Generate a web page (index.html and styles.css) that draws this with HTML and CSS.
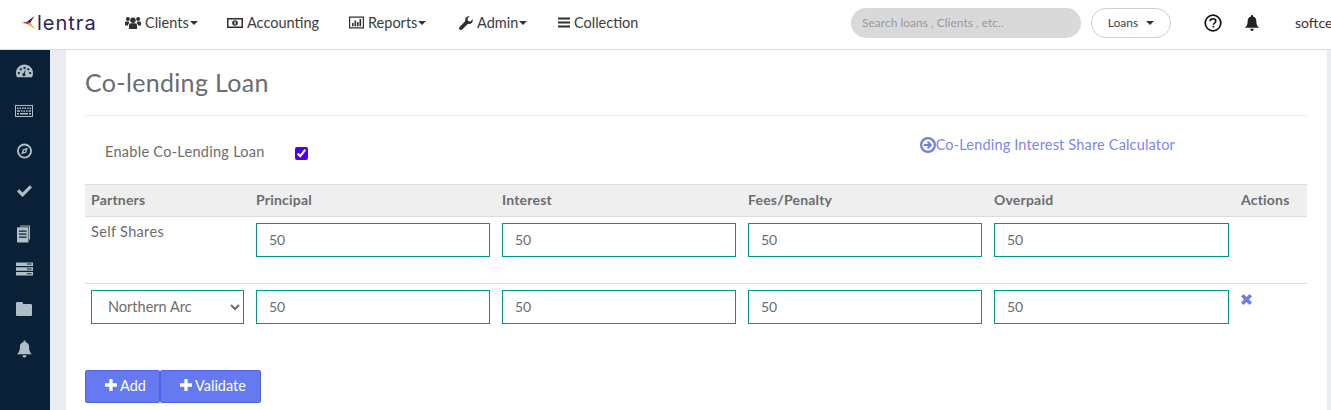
FILE: index.html
```html
<!DOCTYPE html>
<html lang="en">
<head>
    <meta charset="UTF-8">
    <meta name="viewport" content="width=device-width, initial-scale=1.0">
    <link rel="stylesheet" href="styles.css">
    <title>Co-lending Loan</title>
</head>
<body>
    <header class="topbar">
        <a class="brand" href="#">
            <svg class="brand-mark" viewBox="0 0 14 15" width="14" height="15">
                <path d="M5 6.800 L12.500 1 L7.800 8.500 Z" fill="#2b2458"/>
                <path d="M5.500 9.500 L8 7.800 L13.500 14 Z" fill="#f2b01e"/>
                <path d="M0 7.800 L6.500 6.200 L6.800 9.300 Z" fill="#c8283c"/>
            </svg>
            <span>lentra</span>
        </a>
        <nav class="nav">
            <a class="nav-item nav-clients" href="#">
                <svg class="ico" viewBox="0 0 16 14" width="16" height="14"><circle cx="8" cy="4.200" r="2.700"/><circle cx="2.900" cy="3" r="2"/><circle cx="13.100" cy="3" r="2"/><path d="M4 13V9.500C4 8 5 7.300 6 7.300h4c1 0 2 .7 2 2.200V13zM0 9.500V7c0-1 .6-1.600 1.500-1.600h2.200c0 .8.4 1.300.9 1.600C3.700 7.400 3 8.300 3 9.500zM16 9.500V7c0-1-.6-1.600-1.500-1.600h-2.200c0 .8-.4 1.300-.9 1.600 .9.400 1.600 1.300 1.600 2.500z"/></svg>
                Clients<i class="caret"></i>
            </a>
            <a class="nav-item nav-accounting" href="#">
                <svg class="ico" viewBox="0 0 16 12" width="16" height="12"><path fill-rule="evenodd" d="M0 1h16v10H0zM1.500 2.500v7h13v-7zM8 3.200a2.800 2.800 0 1 1 0 5.600 2.800 2.800 0 0 1 0-5.600z"/><rect x="7.400" y="4.500" width="1.200" height="3" fill="#fff"/></svg>
                Accounting
            </a>
            <a class="nav-item nav-reports" href="#">
                <svg class="ico" viewBox="0 0 15 13" width="15" height="13"><path fill-rule="evenodd" d="M0 .5h15v12H0zM1.200 1.700v9.600h12.600V1.700z"/><path d="M3 7h1.600v3.300H3zM5.500 4.500h1.600v5.800H5.500zM8 6h1.600v4.300H8zM10.500 3h1.600v7.300h-1.600z"/></svg>
                Reports<i class="caret"></i>
            </a>
            <a class="nav-item nav-admin" href="#">
                <svg class="ico" viewBox="0 0 14 14" width="14" height="14"><path d="M13.700 3.300c.3 1.400-.1 2.700-1 3.600-1 1-2.400 1.300-3.700.9L3.200 13.500c-.7.700-1.900.7-2.600 0-.7-.7-.7-1.900 0-2.600L6.300 5C5.900 3.700 6.200 2.300 7.200 1.300 8.100.4 9.400 0 10.700.3L8.500 2.600l.5 2.500 2.500.5z"/></svg>
                Admin<i class="caret"></i>
            </a>
            <a class="nav-item nav-collection" href="#">
                <svg class="ico" viewBox="0 0 12 11" width="12" height="11"><path d="M0 .5h12v2H0zM0 4.500h12v2H0zM0 8.500h12v2H0z"/></svg>
                Collection
            </a>
        </nav>
        <div class="topbar-right">
            <input class="search" type="text" placeholder="Search loans , Clients , etc..">
            <button class="loans-btn">Loans <i class="caret caret-small"></i></button>
            <svg class="help" viewBox="0 0 18 18" width="18" height="18"><circle cx="9" cy="9" r="7.800" fill="none" stroke="#111" stroke-width="1.700"/><path d="M6.200 7.200C6.300 5.500 7.500 4.700 9 4.700c1.600 0 2.800 1 2.800 2.300 0 2-2.300 2-2.300 3.700" fill="none" stroke="#111" stroke-width="1.600"/><rect x="8.500" y="11.800" width="1.700" height="1.700" fill="#111"/></svg>
            <svg class="bell" viewBox="0 0 14 16" width="14" height="16"><path d="M7 0c.6 0 1 .4 1 1v.6c2 .4 3.300 2 3.300 4.200 0 4 1.100 5.500 2.700 7H0c1.600-1.500 2.700-3 2.700-7C2.700 3.600 4 2 6 1.600V1c0-.6.400-1 1-1zM5.200 13.800h3.600c0 1.200-.8 2.200-1.800 2.200s-1.800-1-1.800-2.200z" fill="#222"/></svg>
            <span class="username">softcell</span>
        </div>
    </header>

    <div class="layout">
        <aside class="sidebar">
            <svg viewBox="0 0 18 14" width="17" height="13"><path fill-rule="evenodd" d="M9 0c5 0 9 3.800 9 9 0 1.800-.5 3.400-1.300 4.700H1.300C.5 12.400 0 10.800 0 9 0 3.800 4 0 9 0zM3 8a1.200 1.200 0 1 0 0 2.400A1.200 1.200 0 0 0 3 8zm2-4a1.200 1.200 0 1 0 0 2.400A1.200 1.200 0 0 0 5 4zm4-1.500a1.200 1.200 0 1 0 0 2.400 1.200 1.200 0 0 0 0-2.400zM13 4a1.200 1.200 0 1 0 0 2.400A1.200 1.200 0 0 0 13 4zm2 4a1.200 1.200 0 1 0 0 2.400A1.200 1.200 0 0 0 15 8zM10.300 4.500L8 9.500c-.9.200-1.400 1-1.200 1.800.2.900 1 1.400 1.900 1.200.9-.2 1.400-1.100 1.200-1.900-.1-.4-.3-.7-.6-.9z"/></svg>
            <svg viewBox="0 0 18 12" width="18" height="11"><path fill-rule="evenodd" d="M0 0h18v12H0zM1 1v10h16V1z"/><path d="M2 2.500h1.500V4H2zM4.500 2.500H6V4H4.500zM7 2.500h1.500V4H7zM9.500 2.500H11V4H9.500zM12 2.500h1.500V4H12zM14.500 2.500H16V4h-1.500zM2 5.200h3V6.700H2zM6 5.200h1.500V6.700H6zM8.500 5.200H10V6.700H8.500zM11 5.200h1.500V6.700H11zM13.500 5.200H16V6.700h-2.500zM2 8h2v1.500H2zM5 8h8v1.500H5zM14 8h2v1.500h-2z"/></svg>
            <svg viewBox="0 0 16 16" width="15" height="15"><path fill-rule="evenodd" d="M8 0a8 8 0 1 1 0 16A8 8 0 0 1 8 0zm0 2a6 6 0 1 0 0 12A6 6 0 0 0 8 2zm3.500 2.500L9.800 9.800 4.500 11.500 6.200 6.200zM8 7a1 1 0 1 0 0 2 1 1 0 0 0 0-2z"/></svg>
            <svg viewBox="0 0 15 12" width="15" height="11"><path d="M0 6.500L2.200 4.300 5.500 7.600 12.800.300 15 2.500 5.500 12z"/></svg>
            <svg class="side-doc" viewBox="0 0 14 17" width="14" height="17"><path d="M12.300 0H3v1h9v13h1V.700c0-.4-.3-.7-.7-.7z"/><path fill-rule="evenodd" d="M1 1.800h9.500c.6 0 1 .4 1 1V16c0 .6-.4 1-1 1H1c-.6 0-1-.4-1-1V2.800c0-.6.4-1 1-1zM2 5v1.200h7.500V5zm0 3v1.200h7.500V8zm0 3v1.200h7.500V11z"/></svg>
            <svg viewBox="0 0 17 13" width="17" height="13"><path fill-rule="evenodd" d="M0 0h17v3.500H0zM11 1v1h4.500V1zM0 4.700h17v3.500H0zM11 5.900v1h4.500v-1zM0 9.500h17V13H0zM11 10.700v1h4.500v-1z"/></svg>
            <svg viewBox="0 0 16 14" width="16" height="14"><path d="M1.300 0h4.400c.7 0 1.300.6 1.300 1.300V2h7.700c.7 0 1.300.6 1.300 1.300v9.400c0 .7-.6 1.300-1.300 1.300H1.300C.6 14 0 13.400 0 12.700V1.300C0 .6.600 0 1.300 0z"/></svg>
            <svg viewBox="0 0 14 16" width="15" height="16"><path d="M7 0c.6 0 1 .4 1 1v.6c2 .4 3.300 2 3.300 4.200 0 4 1.100 5.500 2.700 7H0c1.600-1.500 2.700-3 2.700-7C2.700 3.600 4 2 6 1.600V1c0-.6.400-1 1-1zM5.200 13.800h3.600c0 1.200-.8 2.200-1.800 2.200s-1.800-1-1.800-2.200z"/></svg>
        </aside>

        <main class="content">
            <section class="card">
                <h2 class="card-title">Co-lending Loan</h2>

                <div class="enable-row">
                    <label class="enable-label">
                        <span>Enable Co-Lending Loan</span>
                        <input class="enable-check" type="checkbox" checked>
                    </label>
                    <a class="calc-link" href="#">
                        <svg viewBox="0 0 16 16" width="16" height="16"><path fill-rule="evenodd" d="M8 0a8 8 0 1 1 0 16A8 8 0 0 1 8 0zm0 2.200a5.800 5.800 0 1 0 0 11.600A5.800 5.800 0 0 0 8 2.200zM8.200 3.900l4 4.100-4 4.100-1.400-1.400 1.700-1.700H3.800V7h4.700L6.800 5.300z"/></svg>Co-Lending Interest Share Calculator
                    </a>
                </div>

                <table class="share-table">
                    <colgroup>
                        <col class="col-partner">
                        <col class="col-value">
                        <col class="col-value">
                        <col class="col-value">
                        <col class="col-value-last">
                        <col>
                    </colgroup>
                    <thead>
                        <tr>
                            <th>Partners</th>
                            <th>Principal</th>
                            <th>Interest</th>
                            <th>Fees/Penalty</th>
                            <th>Overpaid</th>
                            <th>Actions</th>
                        </tr>
                    </thead>
                    <tbody>
                        <tr class="row-self">
                            <td>Self Shares</td>
                            <td><input class="field" type="text" value="50"></td>
                            <td><input class="field" type="text" value="50"></td>
                            <td><input class="field" type="text" value="50"></td>
                            <td><input class="field" type="text" value="50"></td>
                            <td></td>
                        </tr>
                        <tr class="row-partner">
                            <td>
                                <select class="field field-select">
                                    <option>Northern Arc</option>
                                </select>
                            </td>
                            <td><input class="field" type="text" value="50"></td>
                            <td><input class="field" type="text" value="50"></td>
                            <td><input class="field" type="text" value="50"></td>
                            <td><input class="field" type="text" value="50"></td>
                            <td>
                                <svg class="remove" viewBox="0 0 11 11" width="11" height="11"><path d="M0 2.500L2.500 0 5.500 3 8.500 0 11 2.500 8 5.500 11 8.500 8.500 11 5.500 8 2.500 11 0 8.500 3 5.500z"/></svg>
                            </td>
                        </tr>
                    </tbody>
                </table>

                <div class="actions">
                    <button class="btn btn-add"><svg viewBox="0 0 11 11" width="12" height="12"><path d="M4 0h3v4h4v3H7v4H4V7H0V4h4z"/></svg> Add</button>
                    <button class="btn btn-validate"><svg viewBox="0 0 11 11" width="12" height="12"><path d="M4 0h3v4h4v3H7v4H4V7H0V4h4z"/></svg> Validate</button>
                </div>
            </section>
        </main>
    </div>
</body>
</html>
```

FILE: styles.css
```css
* {
    box-sizing: border-box;
}

html, body {
    height: 100%;
    margin: 0;
    overflow: hidden;
}

body {
    font-family: "Lato", "Open Sans", sans-serif;
    font-size: 14px;
    color: #6a6c6f;
    background-color: #fff;
}

a {
    text-decoration: none;
    color: inherit;
}

/* top bar */
.topbar {
    display: flex;
    align-items: center;
    height: 50px;
    padding-left: 22px;
    padding-bottom: 4px;
    background-color: #fff;
    border-bottom: 1px solid #dcdcdc;
}

.brand {
    display: flex;
    align-items: center;
    width: 103px;
    font-family: "Inter", sans-serif;
    font-size: 20px;
    letter-spacing: 1px;
    color: #2b2458;
}

.brand-mark {
    flex: none;
    margin-top: -1px;
    margin-right: 1px;
}

.nav {
    display: flex;
    align-items: center;
    color: #3c3c3c;
    font-size: 14.500px;
}

.nav-item {
    display: flex;
    align-items: center;
}

.nav-item .ico {
    margin-right: 4px;
    fill: #2f2f2f;
}

.nav-clients { width: 102px; }
.nav-accounting { width: 122px; }
.nav-reports { width: 110px; }
.nav-admin { width: 99px; }

.caret {
    display: inline-block;
    width: 0;
    height: 0;
    margin-left: 1px;
    border-top: 4px solid #333;
    border-left: 4px solid transparent;
    border-right: 4px solid transparent;
}

.caret-small {
    margin-left: 5px;
    vertical-align: 2px;
}

.topbar-right {
    display: flex;
    align-items: center;
    flex: none;
    width: 480px;
    margin-left: auto;
}

.topbar-right > * {
    flex: none;
}

.search {
    width: 230px;
    height: 30px;
    padding: 0 11px;
    border: 0;
    border-radius: 15px;
    background-color: #d9d9d9;
    font-family: inherit;
    font-size: 12px;
}

.search::placeholder {
    color: #9a9a9a;
}

.loans-btn {
    width: 80px;
    height: 30px;
    margin-left: 10px;
    padding: 0;
    border: 1px solid #cfcfcf;
    border-radius: 15px;
    background-color: #fff;
    font-family: inherit;
    font-size: 12px;
    color: #444;
}

.help {
    margin-left: 33px;
}

.bell {
    margin-left: 23px;
}

.username {
    margin-left: 36px;
    color: #333;
    white-space: nowrap;
}

/* layout */
.layout {
    display: flex;
    height: 360px;
}

.sidebar {
    display: flex;
    flex-direction: column;
    align-items: center;
    flex: none;
    width: 50px;
    padding-top: 11px;
    background-color: #0a2036;
    fill: #b0bec5;
}

.sidebar svg {
    flex: none;
    height: 20px;
    margin-bottom: 20px;
    margin-left: -2px;
}

.sidebar .side-doc {
    margin-top: 3px;
    margin-bottom: 15px;
}

.content {
    flex: 1;
    padding: 0 4px 0 16px;
    background-color: #e9edf0;
}

.card {
    height: 100%;
    padding: 0 20px 0 19px;
    background-color: #fff;
}

.card-title {
    margin: 0;
    padding: 17px 0 16px;
    height: 66px;
    border-bottom: 1px solid #eaeaea;
    font-size: 25px;
    font-weight: 400;
    letter-spacing: .33px;
    color: #6a6c6f;
}

.enable-row {
    display: flex;
    height: 68px;
}

.enable-label {
    display: flex;
    align-items: center;
    height: 70px;
    padding-left: 20px;
    font-size: 14.500px;
    letter-spacing: .28px;
}

.enable-check {
    width: 13px;
    height: 13px;
    margin: 4px 0 0 30px;
    accent-color: #4a00f0;
}

.calc-link {
    display: flex;
    align-items: center;
    align-self: flex-start;
    margin: 20px 0 0 auto;
    padding-right: 132px;
    font-size: 14.500px;
    letter-spacing: .17px;
    color: #7c86f2;
}

.calc-link svg {
    fill: #6a7cf0;
}

/* table */
.share-table {
    width: 100%;
    table-layout: fixed;
    border-collapse: collapse;
}

.col-partner { width: 165px; }
.col-value { width: 246px; }
.col-value-last { width: 247px; }

.share-table th {
    height: 32px;
    padding: 0 6px 3px;
    text-align: left;
    font-weight: 700;
    letter-spacing: .2px;
    background-color: #efefef;
    border-top: 1px solid #ddd;
    border-bottom: 1px solid #ddd;
}

.share-table td {
    padding: 6px;
    vertical-align: top;
    font-size: 14.500px;
    letter-spacing: .33px;
}

.row-self td {
    height: 67px;
}

.row-partner td {
    height: 86px;
    border-top: 1px solid #ddd;
}

.field {
    display: block;
    width: 100%;
    height: 34px;
    padding: 0 12px 2px;
    border: 1px solid #009688;
    border-radius: 0;
    outline: none;
    background-color: #fff;
    font-family: inherit;
    font-size: 14px;
    color: #6a6c6f;
}

.field-select {
    font-size: 14.500px;
}

.remove {
    display: block;
    margin-top: 4px;
    fill: #6a7cf0;
}

/* buttons */
.actions {
    display: flex;
}

.btn {
    display: flex;
    align-items: center;
    gap: 3px;
    height: 33px;
    padding: 0 0 2px 19px;
    border: 1px solid #4f63ea;
    border-radius: 2px;
    background-color: #6479f2;
    font-family: inherit;
    font-size: 14.500px;
    color: #fff;
    fill: #fff;
}

.btn-add { width: 75px; }

.btn-validate {
    width: 101px;
}
```
